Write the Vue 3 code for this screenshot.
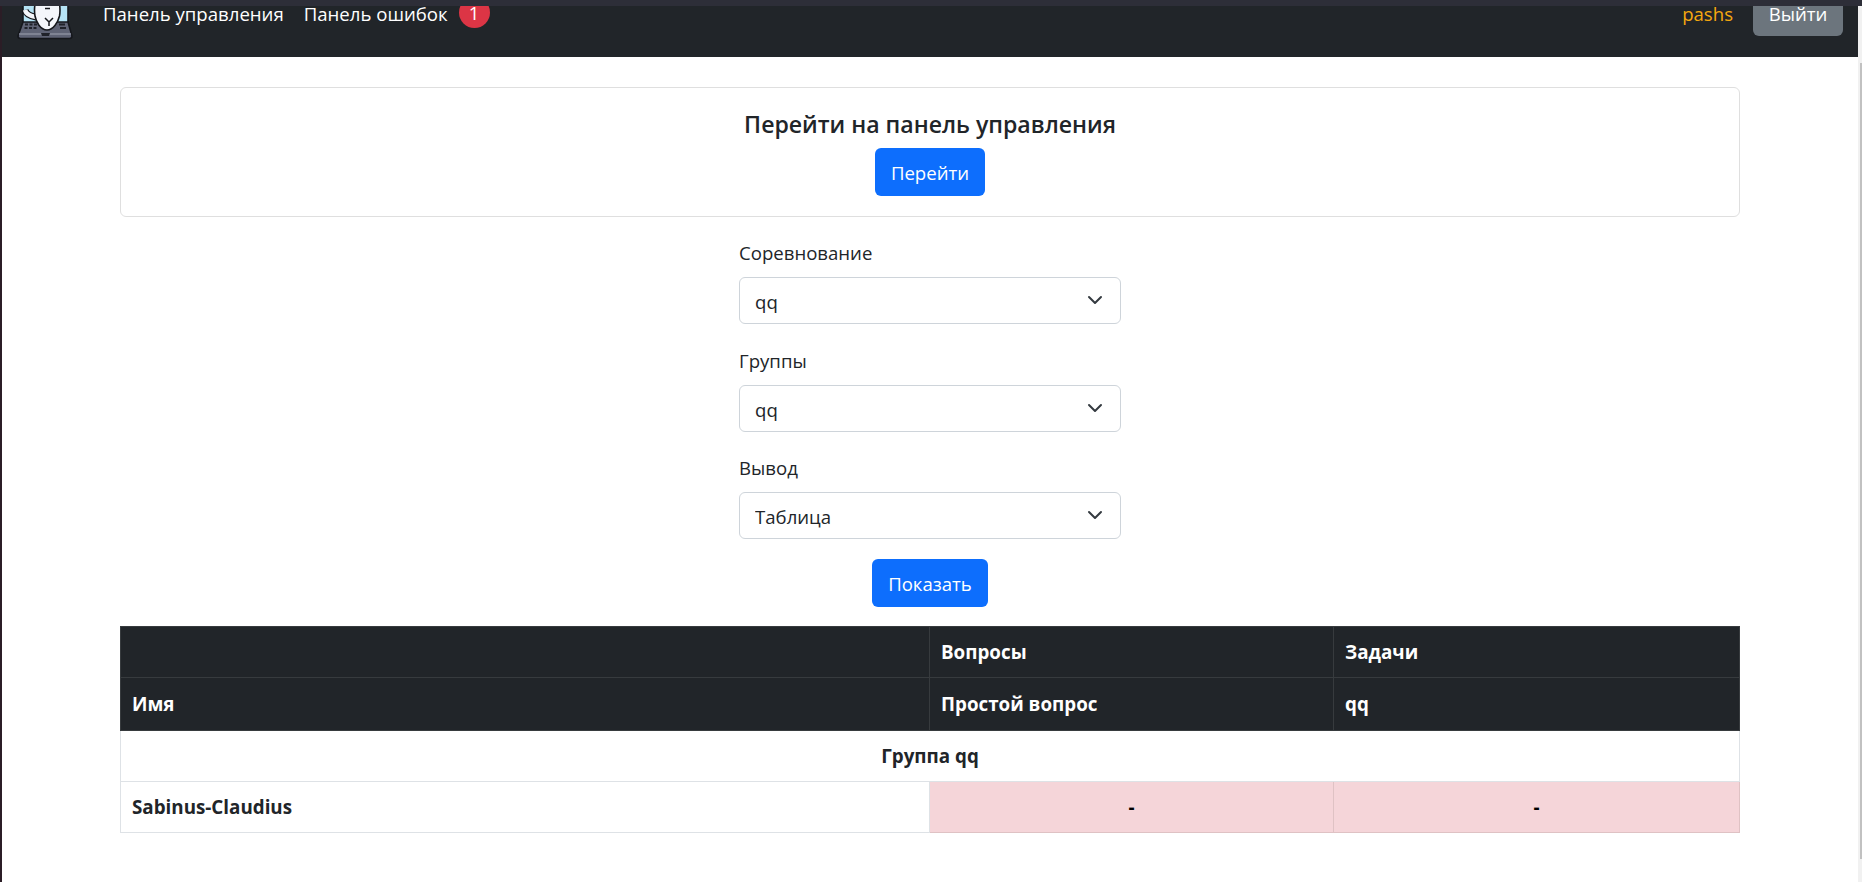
<template>
	<div class="window">
		<div class="topstrip" />
		<div class="viewport">
			<div class="page">
				<nav class="navbar">
					<div class="nav-row">
						<svg class="logo" viewBox="0 0 56 56" width="56" height="56">
							<rect x="6" y="4" width="45" height="36" rx="2" fill="#b5e3f5" stroke="#15171c" stroke-width="1.6" />
							<path d="M8 26c1 4 5 6 11 7" fill="none" stroke="#15171c" stroke-width="7" />
							<path d="M8 26c1 4 5 6 11 7" fill="none" stroke="#f4f6fb" stroke-width="4.500" />
							<path d="M6 38h45l4 14c0 1.500-1 2.500-2.500 2.500h-49C2 54.500 1 53.500 1 52z" fill="#5f6375" stroke="#15171c" stroke-width="1.6" />
							<path d="M2 50h52" stroke="#8a8e9e" stroke-width="1.500" />
							<path d="M8 40.500h3m1.500 0h3m1.500 0h3M7.500 44h3m1.500 0h3m1.500 0h3M42 40.500h6M43 44h6" stroke="#20222a" stroke-width="1.800" />
							<path d="M24 49h9l-1 3h-7z" fill="#20222a" />
							<path d="M19 16c2-5 5-8 11-8s10 3 12 8c1 6 1.500 11 .5 16-1.500 6-6 14-12.500 14S19 38 18 32c-1-6-.5-11 1-16z" fill="#f4f6fb" stroke="#15171c" stroke-width="1.600" />
							<path d="M28 24.500h5M28 34l4 4 4-4M32 38v4" fill="none" stroke="#15171c" stroke-width="1.500" />
						</svg>
						<a class="nav-link first">Панель управления</a>
						<a class="nav-link">Панель ошибок</a>
						<span class="badge">1</span>
						<span class="user">pashs</span>
						<button class="btn btn-gray">Выйти</button>
					</div>
				</nav>

				<main class="content">
					<section class="card">
						<h5 class="card-title">Перейти на панель управления</h5>
						<button class="btn btn-blue go">Перейти</button>
					</section>

					<form class="filters" @submit.prevent>
						<div v-for="field in fields" :key="field.label" class="field">
							<label class="field-label">{{ field.label }}</label>
							<div class="select-wrap">
								<select class="select">
									<option>{{ field.value }}</option>
								</select>
								<svg class="chevron" viewBox="0 0 16 16" width="16" height="16">
									<path d="M2 5l6 6 6-6" fill="none" stroke="#343a40" stroke-width="2" stroke-linecap="round" stroke-linejoin="round" />
								</svg>
							</div>
						</div>
						<button class="btn btn-blue show">Показать</button>
					</form>

					<table class="results">
						<colgroup>
							<col class="col-name" />
							<col class="col-task" />
							<col />
						</colgroup>
						<thead>
							<tr class="head-top">
								<th></th>
								<th>Вопросы</th>
								<th>Задачи</th>
							</tr>
							<tr class="head-bottom">
								<th>Имя</th>
								<th>Простой вопрос</th>
								<th>qq</th>
							</tr>
						</thead>
						<tbody>
							<tr>
								<th class="group" colspan="3">Группа qq</th>
							</tr>
							<tr>
								<th>Sabinus-Claudius</th>
								<td class="miss">-</td>
								<td class="miss">-</td>
							</tr>
						</tbody>
					</table>
				</main>
			</div>
			<div class="scrollbar"><div class="thumb" /></div>
		</div>
	</div>
</template>

<script setup>
const fields = [
	{ label: 'Соревнование', value: 'qq' },
	{ label: 'Группы', value: 'qq' },
	{ label: 'Вывод', value: 'Таблица' }
]
</script>

<style scoped>
.window {
	display: flex;
	flex-direction: column;
	height: 882px;
	overflow: hidden;
	font-family: 'Open Sans', 'Noto Sans', sans-serif;
	font-size: 18.6px;
	color: #212529;
	background: #fff;
}

.topstrip {
	flex: none;
	height: 6px;
	background: #2d2e38;
}

.viewport {
	flex: 1;
	display: flex;
	min-height: 0;
	border-left: 2px solid #2b1d26;
}

.page {
	flex: 1;
	min-width: 0;
}

.navbar {
	display: flex;
	align-items: flex-end;
	height: 51px;
	padding: 0 15px 21px;
	box-sizing: border-box;
	background: #212529;
	overflow: hidden;
}

.nav-row {
	flex: 1;
	display: flex;
	align-items: center;
	height: 48px;
}

.logo {
	flex: none;
}

.nav-link,
.user {
	line-height: 16px;
	margin-top: 4px;
}

.nav-link {
	color: #fff;
	margin-right: 20px;
}

.nav-link.first {
	margin-left: 30px;
}

.nav-link:not(.first) {
	margin-right: 11px;
}

.badge {
	width: 31px;
	height: 31px;
	border-radius: 50%;
	background: #dc3545;
	color: #fff;
	display: flex;
	align-items: center;
	justify-content: center;
}

.user {
	margin-left: auto;
	margin-right: 20px;
	color: #f5a80f;
}

.btn {
	height: 48px;
	border: 0;
	border-radius: 6px;
	color: #fff;
	font: inherit;
	padding: 0;
}

.btn-gray {
	width: 90px;
	padding-top: 2px;
	background: #6c757d;
}

.btn-blue {
	background: #0d6efd;
}

.content {
	padding: 30px 118px 0;
}

.card {
	display: flex;
	flex-direction: column;
	align-items: center;
	height: 130px;
	padding-top: 17px;
	box-sizing: border-box;
	border: 1px solid #dfdfdf;
	border-radius: 6px;
}

.card-title {
	margin: 0 0 5px;
	font-size: 23.1px;
	font-weight: 600;
	line-height: 38px;
}

.go {
	width: 110px;
}

.filters {
	display: flex;
	flex-direction: column;
	align-items: center;
	width: 382px;
	margin: 23px auto 19px;
}

.field {
	width: 100%;
	margin-bottom: 23.5px;
}

.field:last-of-type {
	margin-bottom: 20px;
}

.field-label {
	display: block;
	height: 27px;
	line-height: 25px;
	margin-bottom: 10px;
}

.select-wrap {
	position: relative;
}

.select {
	display: block;
	width: 100%;
	height: 47px;
	padding: 2px 15px 0;
	appearance: none;
	background: #fff;
	border: 1px solid #ced4da;
	border-radius: 6px;
	color: #212529;
	font: inherit;
}

.chevron {
	position: absolute;
	right: 18px;
	top: 15px;
}

.show {
	width: 116px;
}

.results {
	width: 100%;
	table-layout: fixed;
	border-collapse: collapse;
}

.col-name {
	width: 809px;
}

.col-task {
	width: 404px;
}

.results th,
.results td {
	height: 51px;
	padding: 0 11px;
	box-sizing: border-box;
	text-align: left;
	font-weight: 700;
	font-size: 18.8px;
	border: 1px solid #dee2e6;
}

.results .head-top th {
	height: 51px;
}

.results .head-bottom th {
	height: 53px;
}

.results thead th {
	background: #212529;
	color: #fff;
	border-color: #373b3e;
}

.results tbody th.group {
	text-align: center;
}

.results td.miss {
	text-align: center;
	background: #f5d5d9;
	border-color: #dfc2c4;
	color: #000;
}

.scrollbar {
	flex: none;
	width: 4px;
	padding-top: 57px;
	box-sizing: border-box;
	background: #f1f1f1;
}

.thumb {
	margin-left: 2px;
	height: 796px;
	background: #c1c1c1;
}
</style>
